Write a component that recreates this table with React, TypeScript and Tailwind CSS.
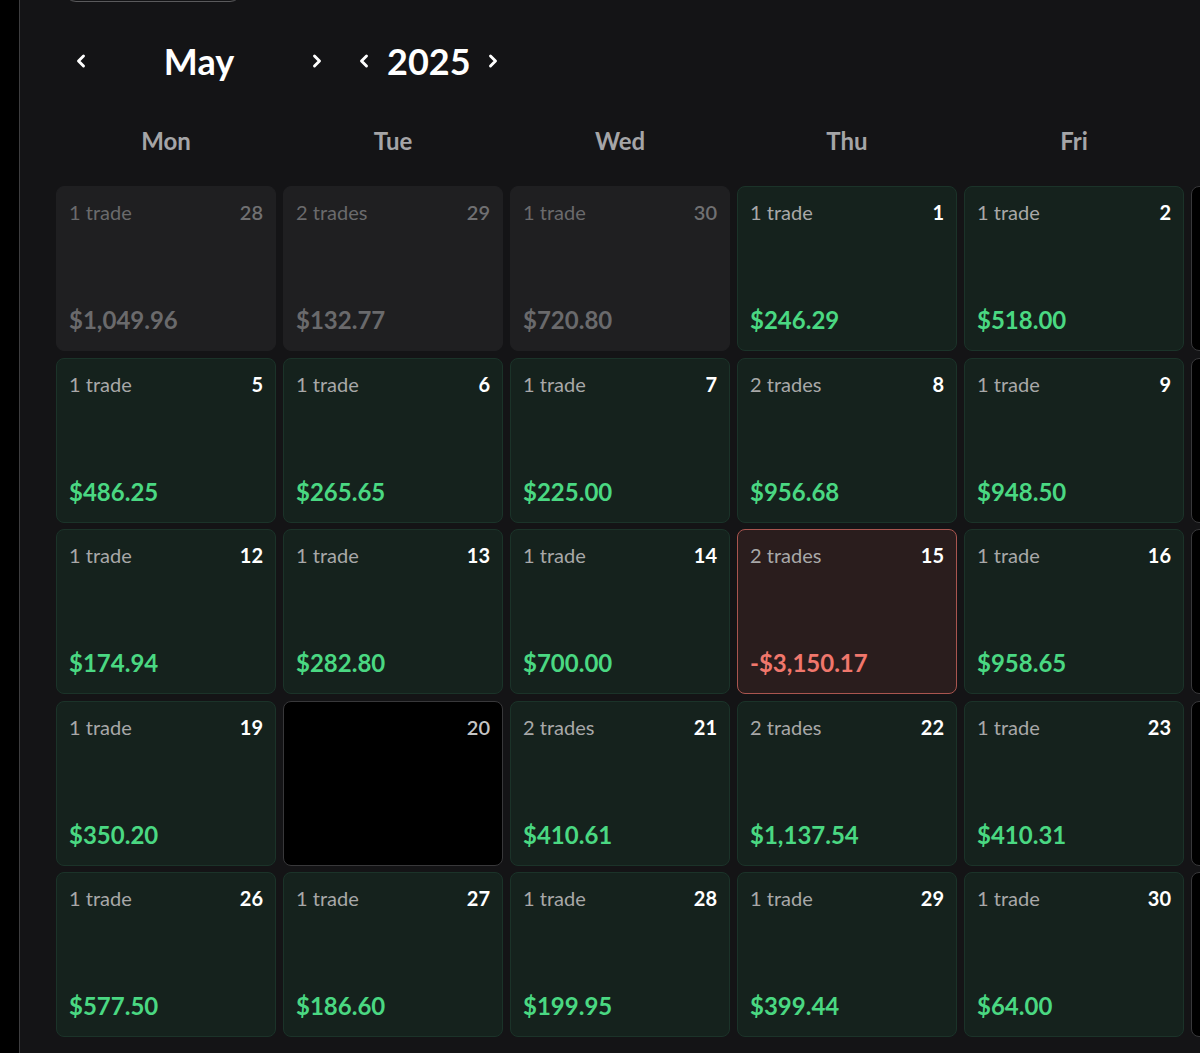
import React from 'react';
import { ChevronLeft, ChevronRight } from 'lucide-react';

type Day = {
  day: number;
  trades?: number;
  pnl?: number;
  kind: 'prev' | 'win' | 'loss' | 'empty';
};

const weeks: Day[][] = [
  [
    { day: 28, trades: 1, pnl: 1049.96, kind: 'prev' },
    { day: 29, trades: 2, pnl: 132.77, kind: 'prev' },
    { day: 30, trades: 1, pnl: 720.8, kind: 'prev' },
    { day: 1, trades: 1, pnl: 246.29, kind: 'win' },
    { day: 2, trades: 1, pnl: 518.0, kind: 'win' },
    { day: 3, kind: 'empty' },
  ],
  [
    { day: 5, trades: 1, pnl: 486.25, kind: 'win' },
    { day: 6, trades: 1, pnl: 265.65, kind: 'win' },
    { day: 7, trades: 1, pnl: 225.0, kind: 'win' },
    { day: 8, trades: 2, pnl: 956.68, kind: 'win' },
    { day: 9, trades: 1, pnl: 948.5, kind: 'win' },
    { day: 10, kind: 'empty' },
  ],
  [
    { day: 12, trades: 1, pnl: 174.94, kind: 'win' },
    { day: 13, trades: 1, pnl: 282.8, kind: 'win' },
    { day: 14, trades: 1, pnl: 700.0, kind: 'win' },
    { day: 15, trades: 2, pnl: -3150.17, kind: 'loss' },
    { day: 16, trades: 1, pnl: 958.65, kind: 'win' },
    { day: 17, kind: 'empty' },
  ],
  [
    { day: 19, trades: 1, pnl: 350.2, kind: 'win' },
    { day: 20, kind: 'empty' },
    { day: 21, trades: 2, pnl: 410.61, kind: 'win' },
    { day: 22, trades: 2, pnl: 1137.54, kind: 'win' },
    { day: 23, trades: 1, pnl: 410.31, kind: 'win' },
    { day: 24, kind: 'empty' },
  ],
  [
    { day: 26, trades: 1, pnl: 577.5, kind: 'win' },
    { day: 27, trades: 1, pnl: 186.6, kind: 'win' },
    { day: 28, trades: 1, pnl: 199.95, kind: 'win' },
    { day: 29, trades: 1, pnl: 399.44, kind: 'win' },
    { day: 30, trades: 1, pnl: 64.0, kind: 'win' },
    { day: 31, kind: 'empty' },
  ],
];

const fmt = (n: number) =>
  (n < 0 ? '-$' : '$') +
  Math.abs(n).toLocaleString('en-US', { minimumFractionDigits: 2, maximumFractionDigits: 2 });

const cellStyles = {
  prev: 'bg-[#1f1f21] border-[#1f1f21]',
  win: 'bg-[#15221d] border-[#1b3329]',
  loss: 'bg-[#2a1d1d] border-[#a9554f]',
  empty: 'bg-black border-[#38383a]',
};

const DayCell = ({ d }: { d: Day }) => {
  const muted = d.kind === 'prev';
  // only the 20th shows its number among the empty days in view
  const showDay = d.kind !== 'empty' || d.day === 20;
  return (
    <div className={`h-[165px] rounded-lg border flex flex-col justify-between px-3 pt-[11px] pb-[14px] ${cellStyles[d.kind]}`}>
      <div className="flex items-center justify-between text-[20px] leading-7">
        <span className={muted ? 'text-[#6a6a6c]' : 'text-[#a8a8a8]'}>
          {d.trades ? `${d.trades} ${d.trades > 1 ? 'trades' : 'trade'}` : ''}
        </span>
        <span
          className={
            muted
              ? 'font-semibold text-[#707072]'
              : d.kind === 'empty'
              ? 'font-semibold text-[#c4c4c4]'
              : 'font-bold text-white'
          }
        >
          {showDay ? d.day : ''}
        </span>
      </div>
      {d.pnl !== undefined && (
        <div
          className={`text-[24px] leading-8 font-bold ${
            muted ? 'text-[#6a6a6c]' : d.pnl < 0 ? 'text-[#f0776c]' : 'text-[#4ad882]'
          }`}
        >
          {fmt(d.pnl)}
        </div>
      )}
    </div>
  );
};

export default function App() {
  return (
    <div className="flex h-[1053px] w-[1200px] overflow-hidden bg-black font-['Lato','Noto_Sans',sans-serif]">
      <div className="w-[20px] shrink-0 bg-black border-r border-[#3d3d3f]" />
      <main className="flex-1 bg-[#141416] pl-[36px] overflow-hidden">
        <div className="ml-[8px] -mt-[38px] h-10 w-[178px] rounded-xl border border-[#5a5a5c]" />

        <div className="mt-[37px] flex items-center text-white">
          <button className="ml-[13px] w-6 flex justify-center">
            <ChevronLeft size={20} strokeWidth={3.5} />
          </button>
          <div className="w-[212px] text-center text-[36px] leading-[44px] font-bold">May</div>
          <button className="w-6 flex justify-center">
            <ChevronRight size={20} strokeWidth={3.5} />
          </button>
          <button className="ml-[23px] w-6 flex justify-center">
            <ChevronLeft size={20} strokeWidth={3.5} />
          </button>
          <div className="text-[36px] leading-[44px] font-bold pl-[11px] pr-[10px]">2025</div>
          <button className="w-6 flex justify-center">
            <ChevronRight size={20} strokeWidth={3.5} />
          </button>
        </div>

        <div className="mt-[42px] grid grid-cols-[repeat(5,220px)] gap-x-[7px] text-[24px] leading-8 font-bold text-[#a5a5a7]">
          {['Mon', 'Tue', 'Wed', 'Thu', 'Fri'].map((w) => (
            <div key={w} className="text-center">{w}</div>
          ))}
        </div>

        <div className="mt-[29px] grid grid-cols-[repeat(7,220px)] gap-x-[7px] gap-y-[6.5px]">
          {weeks.map((wk, i) => (
            <React.Fragment key={i}>
              {wk.map((d, j) => (
                <DayCell key={j} d={d} />
              ))}
              <div className="h-[165px] rounded-lg border bg-black border-[#38383a]" />
            </React.Fragment>
          ))}
        </div>
      </main>
    </div>
  );
}
